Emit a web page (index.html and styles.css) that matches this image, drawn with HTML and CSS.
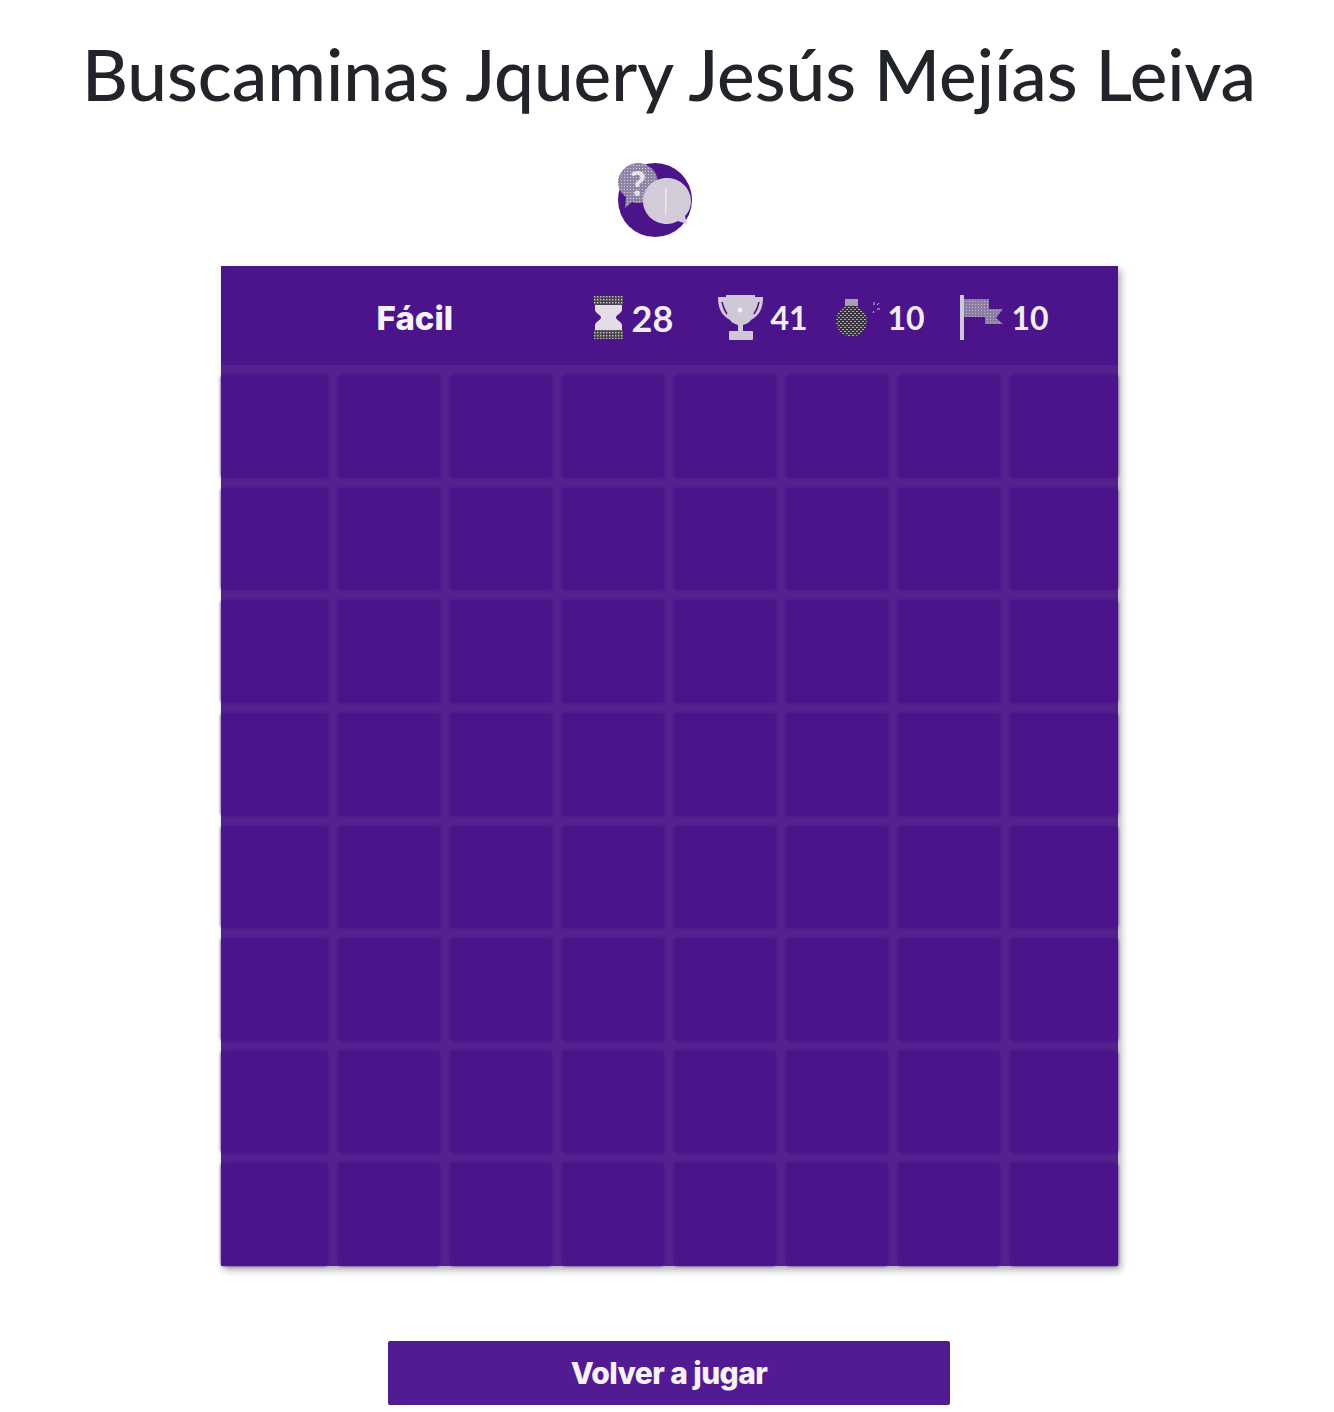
FILE: index.html
```html
<!DOCTYPE html>
<html lang="es">
<head>
    <meta charset="UTF-8">
    <meta name="viewport" content="width=device-width, initial-scale=1.0">
    <title>Buscaminas Jquery Jesús Mejías Leiva</title>
    <link rel="stylesheet" href="styles.css">
</head>
<body>
    <h1 class="title">Buscaminas Jquery Jesús Mejías Leiva</h1>

    <div class="help">
        <svg class="help-icon" width="76" height="78" viewBox="0 0 76 78">
            <defs>
                <pattern id="dotsGrey" width="3" height="3" patternUnits="userSpaceOnUse">
                    <rect width="3" height="3" fill="#8f83a6"/>
                    <rect width="1" height="1" fill="#d8d2de"/>
                </pattern>
            </defs>
            <circle cx="37" cy="38" r="37" fill="#4c148a"/>
            <path d="M20 1c11 0 20 9 20 20s-9 20-20 20c-2 0-4 0-6 -1l-7 6 1-11C3 31 0 26 0 21 0 10 9 1 20 1z" fill="url(#dotsGrey)"/>
            <text class="help-mark" x="20" y="34">?</text>
            <path d="M49 16c13 0 24 10 24 23 0 6-2 11-6 15l2 8-9-3c-4 2-7 3-11 3-13 0-24-10-24-23s11-23 24-23z" fill="#d3cbd8"/>
            <rect x="47" y="26" width="1.500" height="27" fill="#ece8ef"/>
        </svg>
    </div>

    <div class="board">
        <div class="board-header">
            <span class="level">Fácil</span>

            <span class="stat stat-time">
                <svg class="stat-icon" width="29" height="43" viewBox="0 0 29 43">
                    <defs>
                        <pattern id="dotsDark" width="3" height="3" patternUnits="userSpaceOnUse">
                            <rect width="3" height="3" fill="#4a4350"/>
                            <rect width="1.400" height="1.400" fill="#c9c2d0"/>
                        </pattern>
                    </defs>
                    <rect x="0" y="0" width="29" height="9" fill="url(#dotsDark)"/>
                    <rect x="0" y="34" width="29" height="9" fill="url(#dotsDark)"/>
                    <path d="M1 9h27v5c0 3-6 5-6 7.500s6 4.500 6 7.500v5H1v-5c0-3 6-5 6-7.500S1 17 1 14z" fill="#e2dde6"/>
                </svg>
                <span>28</span>
            </span>

            <span class="stat">
                <svg class="stat-icon" width="45" height="45" viewBox="0 0 45 45">
                    <path d="M8 0h29v2h8c0 11-3 18-12 23-2 3-5 4-8 5v6h-5v-6c-3-1-6-2-8-5C3 20 0 13 0 2h8z" fill="#cfc8d6"/>
                    <rect x="11" y="36" width="24" height="9" rx="1" fill="#cfc8d6"/>
                    <path d="M4 7c1 5 3 9 5 12M41 7c-1 5-3 9-5 12" stroke="#4c148a" stroke-width="1.500" fill="none"/>
                    <circle cx="22" cy="15" r="2.500" fill="#f2eff5"/>
                </svg>
                <span>41</span>
            </span>

            <span class="stat">
                <svg class="stat-icon" width="44" height="40" viewBox="0 0 44 40">
                    <defs>
                        <pattern id="dotsBomb" width="4" height="4" patternUnits="userSpaceOnUse">
                            <rect width="4" height="4" fill="#38323f"/>
                            <path d="M0 1h2v1H0zM2 3h2v1H2z" fill="#b5aebd"/>
                        </pattern>
                    </defs>
                    <rect x="9" y="1" width="13" height="7" fill="#a79fb3"/>
                    <circle cx="15.500" cy="23" r="15.500" fill="url(#dotsBomb)"/>
                    <path d="M38 4v3M41 7l2-2M41 11h3M38 13l-1 2" stroke="#c9c2d0" stroke-width="1" fill="none"/>
                </svg>
                <span>10</span>
            </span>

            <span class="stat">
                <svg class="stat-icon" width="44" height="45" viewBox="0 0 44 45">
                    <defs>
                        <pattern id="dotsFlag" width="3" height="3" patternUnits="userSpaceOnUse">
                            <rect width="3" height="3" fill="#8d7ca3"/>
                            <rect width="1" height="1" fill="#c3b9cd"/>
                        </pattern>
                    </defs>
                    <rect x="0" y="0" width="4" height="45" fill="#cfc8d6"/>
                    <path d="M4 4h25v10h14l-7 9 7 6H25V22H4z" fill="url(#dotsFlag)"/>
                </svg>
                <span>10</span>
            </span>
        </div>

        <div class="grid" id="grid"></div>
    </div>

    <button class="replay" type="button">Volver a jugar</button>

    <script>
        var grid = document.getElementById("grid");
        for (var i = 0; i < 64; i++) {
            var cell = document.createElement("div");
            cell.className = "cell";
            grid.appendChild(cell);
        }
    </script>
</body>
</html>
```

FILE: styles.css
```css
body {
    margin: 0;
    padding-left: 4px;
    background-color: #ffffff;
    font-family: 'Lato', sans-serif;
    color: #212529;
    display: flex;
    flex-direction: column;
    align-items: center;
}

.title {
    margin: 32px 0 0;
    font-size: 71px;
    font-weight: 500;
    line-height: 84px;
    text-align: center;
    white-space: nowrap;
}

.help {
    margin-top: 46px;
    width: 897px;
    display: flex;
    justify-content: center;
    padding-right: 26px;
    box-sizing: border-box;
}

.help-icon {
    display: block;
}

.help-mark {
    font-family: 'Lato', sans-serif;
    font-size: 34px;
    font-weight: 900;
    fill: #e6e1ea;
    text-anchor: middle;
}

.board {
    margin-top: 26px;
    width: 897px;
    height: 1000px;
    background-color: #4c148a;
    box-shadow: 3px 4px 7px rgba(60, 50, 70, 0.4);
    display: flex;
    flex-direction: column;
}

.board-header {
    height: 99px;
    padding-left: 156px;
    padding-top: 4px;
    box-sizing: border-box;
    display: grid;
    grid-template-columns: 217px 124px 118px 124px auto;
    align-items: center;
    color: #ffffff;
}

.level {
    font-family: 'Inter', sans-serif;
    font-size: 33px;
    font-weight: 800;
    color: #f6f2fa;
}

.stat {
    display: flex;
    align-items: center;
    gap: 8px;
    color: #f1edf5;
    font-size: 32px;
    font-weight: 700;
}

.stat-time {
    gap: 9px;
    font-size: 36px;
}

.stat-icon {
    display: block;
    flex: none;
}

.grid {
    flex: 1;
    background-color: #54218f;
    padding-top: 10px;
    display: grid;
    grid-template-columns: 107px repeat(6, 1fr) 108px;
    grid-template-rows: repeat(8, 1fr);
    gap: 10px;
}

.cell {
    background-color: #4c148a;
    border-radius: 4px;
    box-shadow: 0 0 3px #4c148a;
}

.replay {
    margin-top: 75px;
    margin-bottom: 7px;
    width: 562px;
    height: 64px;
    background-color: #521b91;
    color: #f6f2fa;
    border: none;
    border-radius: 2px;
    font-family: 'Inter', sans-serif;
    font-size: 30px;
    font-weight: 800;
    letter-spacing: -0.6px;
}
```
